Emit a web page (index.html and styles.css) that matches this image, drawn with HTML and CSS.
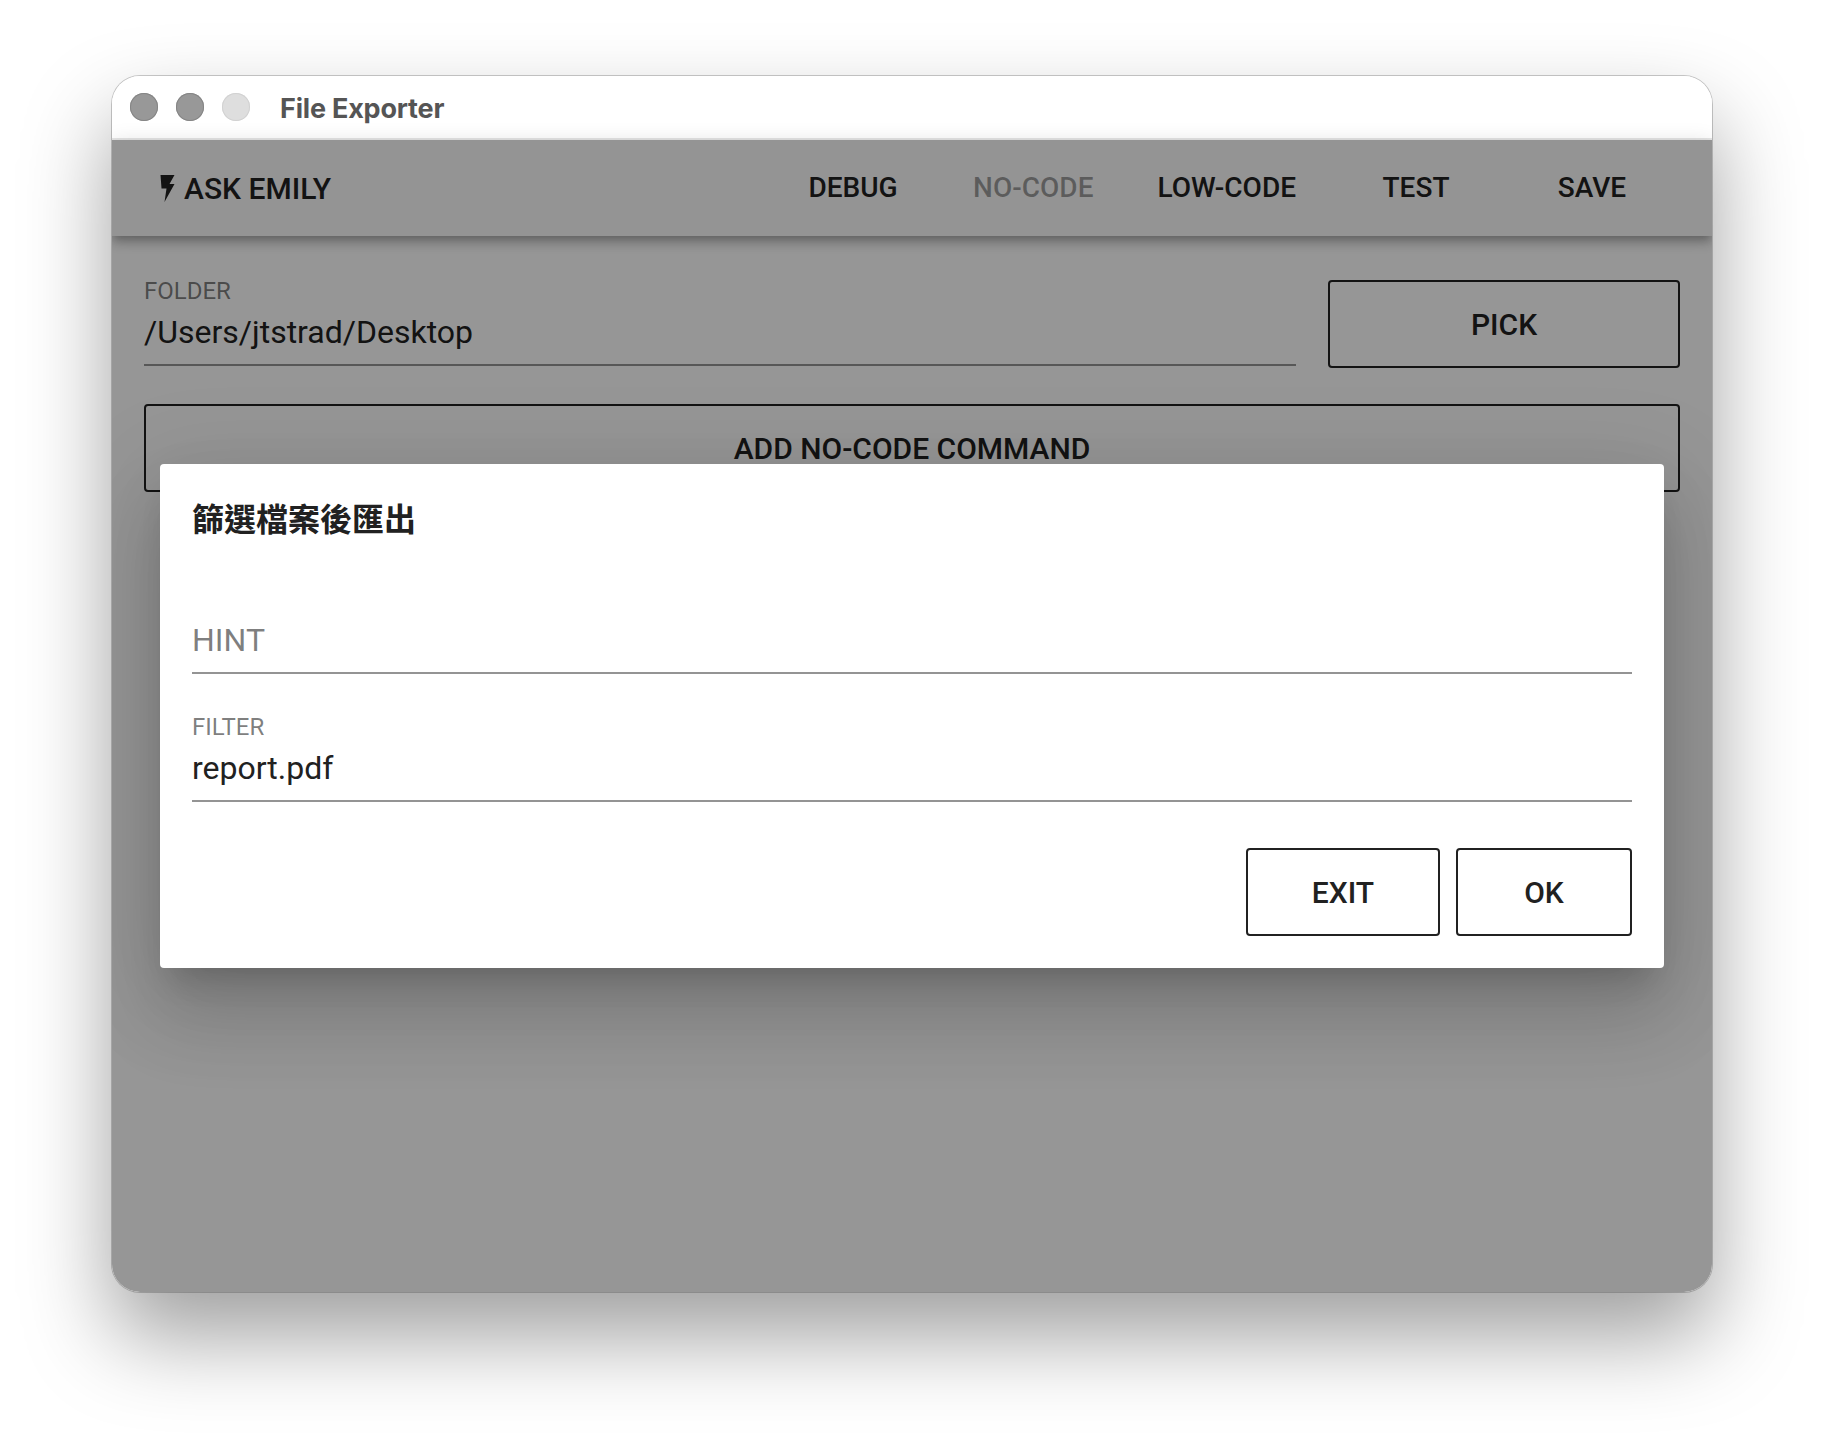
FILE: index.html
```html
<!DOCTYPE html>
<html lang="zh-Hant">
<head>
<meta charset="utf-8">
<title>File Exporter</title>
<link rel="stylesheet" href="styles.css">
</head>
<body>
<div class="window">
  <header class="titlebar">
    <div class="lights">
      <span class="light"></span>
      <span class="light"></span>
      <span class="light light-off"></span>
    </div>
    <div class="title">File Exporter</div>
  </header>
  <div class="app">
    <nav class="appbar">
      <button class="nav ask">
        <svg class="bolt" viewBox="0 0 15 27" aria-hidden="true"><path d="M.5 0H14.500L9.500 9H14.500L4.500 27L6.500 13.500H1.500Z"/></svg>
        <span>ASK EMILY</span>
      </button>
      <div class="spacer"></div>
      <button class="nav">DEBUG</button>
      <button class="nav nav-off">NO-CODE</button>
      <button class="nav">LOW-CODE</button>
      <button class="nav">TEST</button>
      <button class="nav">SAVE</button>
    </nav>
    <main class="content">
      <div class="row">
        <div class="field grow">
          <div class="label">FOLDER</div>
          <div class="value">/Users/jtstrad/Desktop</div>
        </div>
        <button class="outline pick">PICK</button>
      </div>
      <button class="outline wide">ADD NO-CODE COMMAND</button>
    </main>
    <div class="scrim">
      <section class="dialog">
        <h1 class="dialog-title">篩選檔案後匯出</h1>
        <div class="field hint-field">
          <div class="label"></div>
          <div class="value hint">HINT</div>
        </div>
        <div class="field filter-field">
          <div class="label">FILTER</div>
          <div class="value">report.pdf</div>
        </div>
        <div class="actions">
          <button class="outline exit">EXIT</button>
          <button class="outline ok">OK</button>
        </div>
      </section>
    </div>
  </div>
</div>
</body>
</html>
```

FILE: styles.css
```css
* { box-sizing: border-box; }

html, body {
  margin: 0;
  height: 100%;
  background: #fff;
}

body {
  padding: 76px 112px 148px;
  font-family: Roboto, "Noto Sans CJK TC", sans-serif;
  color: #212121;
}

button {
  font: 500 28px Roboto, sans-serif;
  color: inherit;
  background: none;
  border: 0;
  padding: 0;
}

.window {
  height: 1216px;
  display: flex;
  flex-direction: column;
  border-radius: 28px;
  overflow: hidden;
  box-shadow: 0 0 0 1px rgba(0, 0, 0, .2), 0 44px 88px rgba(0, 0, 0, .38);
}

.titlebar {
  height: 64px;
  flex: none;
  display: flex;
  align-items: center;
  padding: 0 18px;
  background: #fff;
  border-bottom: 2px solid #e6e6e6;
}

.lights {
  display: flex;
  gap: 18px;
}

.light {
  width: 28px;
  height: 28px;
  border-radius: 50%;
  background: #989898;
  box-shadow: inset 0 0 0 1px #858585;
}

.light-off {
  background: #dedede;
  box-shadow: inset 0 0 0 1px #d2d2d2;
}

.title {
  margin: 3px 0 0 30px;
  font: 700 27px Inter, sans-serif;
  letter-spacing: -.2px;
  color: #555;
}

.app {
  flex: 1;
  position: relative;
  display: flex;
  flex-direction: column;
  background: #fbfbfb;
}

.appbar {
  height: 96px;
  flex: none;
  display: flex;
  align-items: center;
  padding: 0 32px;
  background: #f7f7f7;
  box-shadow: 0 4px 8px -2px rgba(0, 0, 0, .2), 0 8px 10px rgba(0, 0, 0, .14), 0 2px 20px rgba(0, 0, 0, .12);
}

.spacer { flex: 1; }

.nav {
  min-width: 176px;
  height: 72px;
  padding: 0 32px 2px;
  text-align: center;
}

.nav-off { color: rgba(0, 0, 0, .38); }

.ask {
  display: flex;
  align-items: center;
  gap: 9px;
  padding: 0 16px;
  font-size: 30px;
}

.bolt {
  width: 15px;
  height: 27px;
  fill: #212121;
  flex: none;
}

.content {
  display: flex;
  flex-direction: column;
  gap: 36px;
  padding: 41px 32px;
}

.row {
  display: flex;
  align-items: flex-start;
  gap: 32px;
}

.grow { flex: 1; }

.field {
  border-bottom: 2px solid rgba(0, 0, 0, .42);
  padding-bottom: 13px;
}

.label {
  height: 28px;
  margin-bottom: 8px;
  font-size: 24px;
  line-height: 28px;
  color: rgba(0, 0, 0, .52);
}

.value {
  font-size: 32px;
  line-height: 38px;
}

.hint { color: rgba(0, 0, 0, .52); }

.outline {
  height: 88px;
  border: 2px solid #212121;
  border-radius: 4px;
  font-size: 30px;
  text-align: center;
}

.pick {
  width: 352px;
  flex: none;
  margin-top: 3px;
}

.scrim {
  position: absolute;
  inset: 0;
  display: flex;
  align-items: center;
  padding: 0 48px;
  background: rgba(0, 0, 0, .4);
}

.dialog {
  flex: 1;
  display: flex;
  flex-direction: column;
  padding: 32px;
  background: #fff;
  border-radius: 4px;
  box-shadow: 0 22px 30px -14px rgba(0, 0, 0, .18), 0 48px 76px 6px rgba(0, 0, 0, .12), 0 18px 92px 16px rgba(0, 0, 0, .1);
}

.dialog-title {
  margin: 0;
  font: 700 32px/42px "Noto Sans CJK TC", sans-serif;
}

.hint-field { margin-top: 47px; }

.filter-field { margin-top: 39px; }

.actions {
  display: flex;
  justify-content: flex-end;
  gap: 16px;
  margin-top: 46px;
}

.exit { padding: 0 64px; }

.ok { width: 176px; }
```
